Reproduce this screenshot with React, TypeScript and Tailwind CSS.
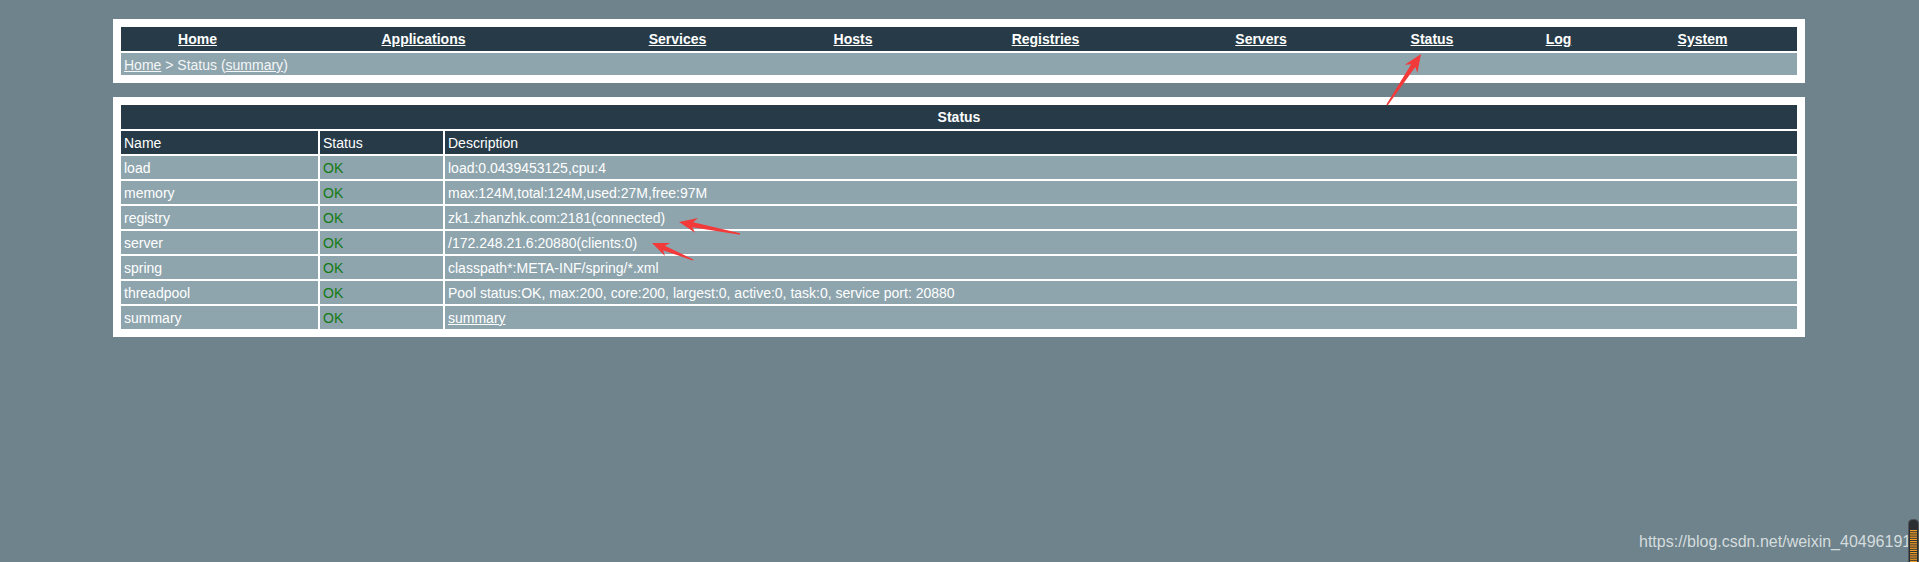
import React from "react";

const navItems: { label: string; cls: string }[] = [
  { label: "Home", cls: "w-[153px]" },
  { label: "Applications", cls: "w-[299px]" },
  { label: "Services", cls: "w-[209px]" },
  { label: "Hosts", cls: "w-[142px]" },
  { label: "Registries", cls: "w-[243px]" },
  { label: "Servers", cls: "w-[188px]" },
  { label: "Status", cls: "w-[154px]" },
  { label: "Log", cls: "w-[99px]" },
  { label: "System", cls: "w-[189px]" },
];

const rows: { name: string; desc: string; link?: boolean }[] = [
  { name: "load", desc: "load:0.0439453125,cpu:4" },
  { name: "memory", desc: "max:124M,total:124M,used:27M,free:97M" },
  { name: "registry", desc: "zk1.zhanzhk.com:2181(connected)" },
  { name: "server", desc: "/172.248.21.6:20880(clients:0)" },
  { name: "spring", desc: "classpath*:META-INF/spring/*.xml" },
  {
    name: "threadpool",
    desc: "Pool status:OK, max:200, core:200, largest:0, active:0, task:0, service port: 20880",
  },
  { name: "summary", desc: "summary", link: true },
];

function arrowPoints(
  sx: number,
  sy: number,
  tx: number,
  ty: number,
  hl = 17,
  hw = 7,
  sw = 2.2,
  barb = 4,
  tw = 0.6
): string {
  const dx = tx - sx;
  const dy = ty - sy;
  const L = Math.hypot(dx, dy);
  const ux = dx / L;
  const uy = dy / L;
  const nx = -uy;
  const ny = ux;
  const wx = tx - hl * ux;
  const wy = ty - hl * uy;
  const ix = tx - (hl - barb) * ux;
  const iy = ty - (hl - barb) * uy;
  const pts: [number, number][] = [
    [sx + tw * nx, sy + tw * ny],
    [ix + sw * nx, iy + sw * ny],
    [wx + hw * nx, wy + hw * ny],
    [tx, ty],
    [wx - hw * nx, wy - hw * ny],
    [ix - sw * nx, iy - sw * ny],
    [sx - tw * nx, sy - tw * ny],
  ];
  return pts.map((p) => `${p[0].toFixed(1)},${p[1].toFixed(1)}`).join(" ");
}

const cell = "h-[23px] box-border pt-[1px] pl-[3px] leading-[23px]";

export default function App() {
  return (
    <div className="relative w-[1919px] h-[562px] overflow-hidden bg-[#6e838b] pt-[19px] font-['Liberation_Sans',Arial,sans-serif] text-[14px] text-white">
      {/* Navigation box */}
      <div className="ml-[113px] w-[1692px] bg-white p-[8px] flex flex-col gap-[2px]">
        <div className="flex h-[24px] bg-[#263b47] font-bold leading-[24px]">
          {navItems.map((n) => (
            <div key={n.label} className={`${n.cls} text-center`}>
              <a className="underline text-white">{n.label}</a>
            </div>
          ))}
        </div>
        <div className="h-[22px] box-border pt-[1px] bg-[#8ea5ae] pl-[3px] leading-[22px] text-[#f4f6f7]">
          <a className="underline">Home</a> &gt; Status (<a className="underline">summary</a>)
        </div>
      </div>

      {/* Status table box */}
      <div className="mt-[14px] ml-[113px] w-[1692px] bg-white p-[8px] flex flex-col gap-[2px]">
        <div className="h-[24px] bg-[#263b47] font-bold text-center leading-[24px]">Status</div>
        <div className="grid grid-cols-[197px_123px_1fr] gap-[2px]">
          <div className={`${cell} bg-[#263b47]`}>Name</div>
          <div className={`${cell} bg-[#263b47]`}>Status</div>
          <div className={`${cell} bg-[#263b47]`}>Description</div>
          {rows.map((r) => (
            <React.Fragment key={r.name}>
              <div className={`${cell} bg-[#8ea5ae]`}>{r.name}</div>
              <div className={`${cell} bg-[#8ea5ae] text-[#127a12]`}>OK</div>
              <div className={`${cell} bg-[#8ea5ae]`}>
                {r.link ? <a className="underline">{r.desc}</a> : r.desc}
              </div>
            </React.Fragment>
          ))}
        </div>
      </div>

      {/* Annotation arrows */}
      <svg
        className="absolute left-0 top-0 pointer-events-none"
        width="1919"
        height="562"
        viewBox="0 0 1919 562"
      >
        <polygon points={arrowPoints(1387, 105, 1421, 54, 18, 7.5, 2.5, 4, 0.7)} fill="#f23a3a" />
        <polygon points={arrowPoints(740, 234, 679, 222, 18, 7.5, 2.5, 4, 0.7)} fill="#f23a3a" />
        <polygon points={arrowPoints(693, 260, 652, 243, 17, 7, 2.4, 4, 0.7)} fill="#f23a3a" />
      </svg>

      {/* Watermark */}
      <div className="absolute left-[1639px] top-[534px] whitespace-nowrap text-[16px] leading-[16px] text-[#d5dcde] font-['Liberation_Sans',Arial,sans-serif]">
        https://blog.csdn.net/weixin_40496191
      </div>

      {/* Small widget at bottom right */}
      <svg className="absolute left-[1908px] top-[519px]" width="11" height="43" viewBox="0 0 11 43">
        <rect x="0.5" y="0.5" width="10" height="46" rx="4" fill="#2b2f31" stroke="#50565a" />
        {Array.from({ length: 15 }).map((_, i) => (
          <rect key={i} x="2" y={11 + i * 2.2} width="7" height="1.2" fill="#f7a028" />
        ))}
      </svg>
    </div>
  );
}
